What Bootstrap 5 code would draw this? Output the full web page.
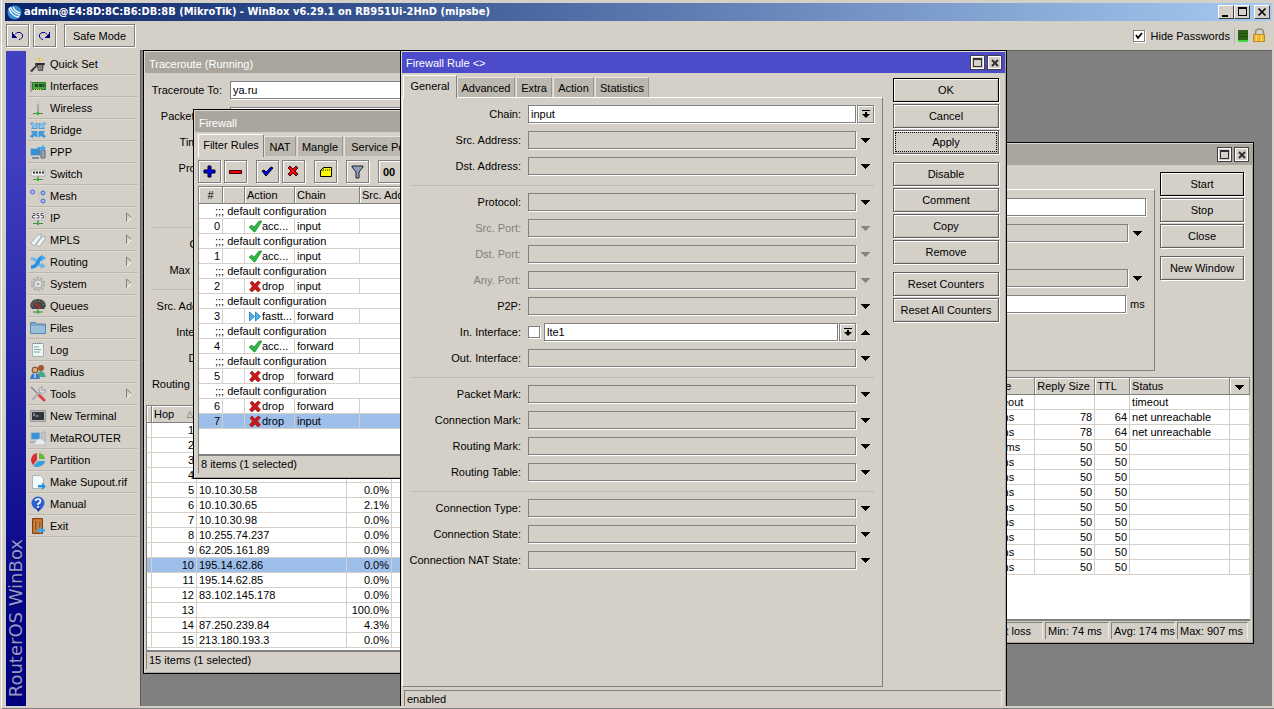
<!DOCTYPE html>
<html lang="en">
<head>
<meta charset="utf-8">
<meta name="viewport" content="width=device-width, initial-scale=1">
<title>WinBox</title>
<link href="https://cdn.jsdelivr.net/npm/bootstrap@5.3.0/dist/css/bootstrap.min.css" rel="stylesheet">
<style>
:root{--face:#d4d0c8;--dim:#808080;--sel:#9dbfea}
body{font:11px/14px "Liberation Sans",Arial,sans-serif;color:#000;background:var(--face)}
.app{border-left:1px solid #fff;border-bottom:1px solid var(--dim);padding:3px 2px 2px 3px;margin-left:1px}
.caption-bar{height:18px;background:linear-gradient(90deg,#0a246a,#a6caf0);color:#fff;font:bold 11px/18px "DejaVu Sans Condensed","DejaVu Sans",sans-serif;padding:0 2px 0 2px}
.logo{margin-right:2px}
.sysbtn{width:16px;height:14px;padding:0;border:1px solid;border-color:#fff #404040 #404040 #fff;background:var(--face);border-radius:0;line-height:0}
.toolbar{height:29px;padding:0 4px 0 1px}
.face{border:1px solid var(--dim);border-radius:0;background:var(--face);color:#000;box-shadow:inset 1px 1px #fff,1px 1px #fff;padding:0;font:inherit;display:flex;align-items:center;justify-content:center;cursor:default}
.icon-btn{width:23px;height:23px}
.safe{width:71px;height:23px}
.hide-pw{margin-left:6px}
.wide{height:24px;border-color:#606060;box-shadow:inset 1px 1px #fff,inset -1px -1px #c0bcb4,1px 1px #fff}
.default-btn{border-color:#000}
.focused-btn::before{content:"";position:absolute;inset:1px;border:1px dotted #000}
.brand{width:20px;margin:1px 0 0 1px;background:linear-gradient(#4040c0 0,#4040c0 15%,#000080 90%)}
.brand span{writing-mode:vertical-rl;transform:rotate(180deg);font:18px/20px "DejaVu Sans",sans-serif;color:#9898cc;text-shadow:-1px -1px 1px #000040;padding-top:9px}
.side{width:114px;padding:3px 2px 0}
.side a{height:22px;color:#000;text-decoration:none;border-bottom:1px solid #bcb8b0;box-shadow:0 1px #dedad2;padding:0 6px 0 2px;gap:4px;white-space:nowrap}
.side svg{width:16px;height:16px;flex:none}
.side .arr{width:6px;height:11px}
.desk{background:var(--dim);border-left:1px solid #5c5c5c;box-shadow:inset 0 1px #606060}
.win{position:absolute;background:var(--face);border:1px solid #000;box-shadow:inset 1px 1px #dedad2,inset -1px -1px #aaa69e;padding:1px}
.win-title{height:21px;background:#aaa69e;color:#fff;padding:0 3px 0 4px;gap:2px;line-height:24px}
.active-title{background:#4c4ccb}
.mini{width:15px;height:15px;padding:0;border:1px solid #404040;background:var(--face);border-radius:0;box-shadow:inset 0 0 0 1px #fff;line-height:0;display:flex;align-items:center;justify-content:center}
.w-trace{left:2px;top:0;width:700px;height:624px}
.w-ping{left:560px;top:92px;width:553px;height:502px}
.w-fw{left:52px;top:59px;width:600px;height:370px}
.w-rule{left:259px;top:0;width:607px;height:676px}
.fld{height:18px;min-height:0;padding:0 2px;border:1px solid var(--dim);border-radius:0;background:#fff;box-shadow:1px 1px #fff;font:inherit;color:#000;min-width:0}
.fld.off,.fld:disabled{background:var(--face)}
.box{width:12px;height:12px;margin:0;border:1px solid var(--dim);background-color:#fff;box-shadow:1px 1px #fff;appearance:none;flex:none}
.tick{position:relative;width:12px;height:12px}
.tick svg{position:absolute;left:2px;top:2px;pointer-events:none}
.rows{display:flex;flex-direction:column;gap:8px}
.line{display:flex;align-items:center;height:18px}
.line label{text-align:right;flex:none}
.rule{padding-top:7px;height:590px}
.rule label{width:118px;margin-right:7px}
.trace label{width:77px;margin-right:8px}
.dis{color:var(--dim)}
.sep{height:1px;background:#bcb8b0;margin:10px 8px 7px 8px}
.drop{width:18px;height:18px;border:0;background:none;padding:0;flex:none;display:flex;align-items:center;justify-content:center}
.pull{width:17px;height:18px;flex:none;margin-left:1px}
.tabs{height:22px;padding-left:1px}
.tab{border:0;border-left:1px solid #e8e4dc;border-right:1px solid #9a968e;border-top:1px solid #e8e4dc;background:#bcb8b0;color:#000;font:inherit;height:20px;border-radius:0;padding:0;margin-right:1px}
.tab.on{height:23px;background:var(--face);border-color:#fff var(--dim) #fff #fff;margin:0 0 -1px;z-index:1;position:relative;padding-bottom:3px}
.rule-tabs{margin-top:2px}
.t32{width:32px}.t36{width:36px}.t41{width:41px}.t46{width:46px}.t52{width:52px}.t54{width:54px}.t58{width:58px}.t66{width:66px}.t80{width:80px}
.pane{border:1px solid;border-color:#fff var(--dim) var(--dim) #fff}
.dt{table-layout:fixed;border-collapse:separate;border-spacing:0;margin:0;width:auto;color:#000}
.dt td,.dt th{height:15px;padding:0 2px;border:0;border-right:1px solid var(--face);border-bottom:1px solid var(--face);background:#fff;font-weight:400;line-height:14px;white-space:nowrap;overflow:hidden;box-shadow:none;color:#000;vertical-align:middle}
.dt th{height:17px;background:var(--face);border-right-color:var(--dim);border-bottom-color:var(--dim);box-shadow:inset 1px 1px #fff}
.dt .n{text-align:right}
.dt .sel td{background:var(--sel)}
.c4{width:4px}.c20{width:20px}.c22{width:22px}.c24{width:24px}.c35{width:35px}.c45{width:45px}.c50{width:50px}.c60{width:60px}.c65{width:65px}.c100{width:100px}.c150{width:150px}.c283{width:283px}.c300{width:300px}
.sheet{background:#fff;border-top:1px solid var(--dim);border-left:1px solid var(--dim);border-bottom:2px solid var(--dim);overflow:hidden}
.trace-sheet{margin:12px 2px 0 1px}
.trace-stat{margin:0 2px 3px 1px}
.ping-sheet{margin:6px 2px 0 0}
.stat{border-top:1px solid var(--dim);border-left:1px solid var(--dim);border-right:1px solid #f0ece4;padding:0 2px;height:17px;line-height:17px;white-space:nowrap}
.cmd{width:106px;gap:2px;margin:0 6px 0 10px;padding-top:5px}
.gap-above{margin-top:6px}
.act{display:flex;align-items:center;padding-left:1px}
.act svg{width:14px;height:13px;flex:none}
.ping-pane{margin-right:5px;height:182px;border-left:0}
.spacer{height:27px}
.unit{width:20px;padding-left:4px}
.line .unit{text-align:left}
.cmd2{width:92px;padding:7px 8px 0 0;gap:2px}
.ping-stats{gap:2px;padding:1px 4px 3px 0}
.loss{width:70px;text-align:right;padding-right:14px}.s64{width:64px}.s70{width:71px}
.fw-tabs{margin:2px 0 0 2px}
.fw-body{margin-left:3px}
.fw-tools{height:30px;padding:4px 0 0;gap:3px}
.fw-tools .apart{margin-left:6px}
.reset{width:90px}
.rule-stat{margin:3px 3px 0 2px}
</style>
</head>
<body>
<svg width="0" height="0" class="position-absolute" aria-hidden="true">
<defs>
<symbol id="dn" viewBox="0 0 9 5"><path d="M0 0h9v1h-1v1h-1v1h-1v1h-1v1h-1v-1h-1v-1h-1v-1h-1v-1h-1z"/></symbol>
<symbol id="up" viewBox="0 0 9 5"><path d="M0 5h9v-1h-1v-1h-1v-1h-1v-1h-1v-1h-1v1h-1v1h-1v1h-1v1h-1z"/></symbol>
<symbol id="pl" viewBox="0 0 8 8"><path d="M0 0h8v1H0zM3 2h2v2h3L4 8 0 4h3z"/></symbol>
<symbol id="mx" viewBox="0 0 9 9"><path d="M0 0h9v9H0zM1 2v6h7V2z" fill="#303030" fill-rule="evenodd"/></symbol>
<symbol id="cl" viewBox="0 0 8 8"><path d="M1 1l6 6M7 1L1 7" stroke="#303030" stroke-width="2"/></symbol>
<symbol id="arr" viewBox="0 0 6 11"><path d="M.5 10V1l5 4.500" fill="none" stroke="#808080"/><path d="M5.500 5.500l-5 5" stroke="#fff"/></symbol>
<symbol id="ok" viewBox="0 0 14 13"><path d="M1 7l3-2 2 2 5-6 3 0-7 11-1 0z" fill="#2db53e" stroke="#188a2c" stroke-width=".6"/></symbol>
<symbol id="no" viewBox="0 0 14 13"><path d="M2 3l2-2 3 3 3-3 2.500 1.500L9.500 6l3 4-2.500 2-3-3-3 3L1.500 10l3-4z" fill="#c81818" stroke="#8c1010" stroke-width=".6"/></symbol>
<symbol id="ff" viewBox="0 0 14 13"><path d="M1.500 2l5 4.500-5 4.500zM7.500 2l5 4.500-5 4.500z" fill="#4cb4f0" stroke="#2078b8" stroke-width=".8"/></symbol>
<symbol id="undo" viewBox="0 0 13 11"><path d="M1 2v6h5V7H5V6H4V5H3V4H2V2z" fill="#000080"/><path d="M4 4.500L6 2.500h3l2.500 2v2.500L9 9.500H8" fill="none" stroke="#000080"/></symbol>
</defs>
</svg>
<div class="app vh-100 d-flex flex-column overflow-hidden">
<header class="caption-bar d-flex align-items-center">
<svg width="15" height="15" viewBox="0 0 15 15" class="logo"><circle cx="7.500" cy="7.500" r="7" fill="#3a8cd4"/><path d="M2 3c1 5 5 9 10 9M3 2c2 4 5 7 10 8M6 2c1 3 4 5 7 6" stroke="#fff" fill="none" stroke-width="1.300"/></svg>
<span class="flex-grow-1 text-truncate">admin@E4:8D:8C:B6:DB:8B (MikroTik) - WinBox v6.29.1 on RB951Ui-2HnD (mipsbe)</span>
<button class="sysbtn" aria-label="Minimize"><svg width="12" height="10"><path d="M2 8h6v2H2z"/></svg></button>
<button class="sysbtn" aria-label="Maximize"><svg width="12" height="10"><path d="M2 0h9v9H2zM3 2v6h7V2z" fill-rule="evenodd"/></svg></button>
<button class="sysbtn ms-1" aria-label="Close"><svg width="12" height="10"><path d="M2.500 1.500l7 7M9.500 1.500l-7 7" stroke="#000" stroke-width="1.600"/></svg></button>
</header>
<div class="toolbar d-flex align-items-center">
<button class="btn face icon-btn" aria-label="Undo"><svg width="13" height="11"><use href="#undo"/></svg></button>
<button class="btn face icon-btn ms-1" aria-label="Redo"><svg width="13" height="11"><use href="#undo" transform="matrix(-1 0 0 1 13 0)"/></svg></button>
<button class="btn face safe ms-2">Safe Mode</button>
<span class="tick ms-auto"><input class="box d-block" type="checkbox" id="hp" checked><svg width="8" height="8"><path d="M1 3l2 3 4-5" stroke="#000" stroke-width="1.800" fill="none"/></svg></span>
<label for="hp" class="hide-pw">Hide Passwords</label>
<svg class="ms-1" width="34" height="16"><path d="M.5 0v16" stroke="#bcb8b0"/><path d="M4 2h10v12H4z" fill="#2c6414"/><path d="M4 5.500h10M4 8.500h10" stroke="#205010"/><path d="M4 12h10v2H4z" fill="#40d840"/><path d="M21.500 8V4q0-3 4-3t4 3v4" fill="none" stroke="#909080" stroke-width="1.600"/><path d="M19.500 6.500h11v7h-11z" fill="#f4b838" stroke="#c08820"/><path d="M22.500 7v6M27.500 7v6" stroke="#fce060"/></svg>
</div>
<div class="d-flex flex-grow-1 overflow-hidden">
<div class="brand flex-shrink-0 d-flex align-items-end"><span>RouterOS WinBox</span></div>
<nav class="side flex-shrink-0">
<a href="#" class="d-flex align-items-center"><svg viewBox="0 0 16 16"><path d="M0 15l8-8 1 1-7 8z" fill="#333"/><path d="M6 7h8l-1 8H8z" fill="#555"/><path d="M9 9v5M11 9v5" stroke="#aaa"/><path d="M5 8h10" stroke="#222" stroke-width="1.500"/><path d="M5 3h2M9 1v3M12 3l1 1M8 5h2" stroke="#e8c030" stroke-width="1.200"/></svg>Quick Set</a>
<a href="#" class="d-flex align-items-center"><svg viewBox="0 0 16 16"><path d="M1 3v11" stroke="#999" stroke-width="1.500"/><path d="M2.500 4.500h13v7h-13z" fill="#48a848" stroke="#287828"/><path d="M5 6h3v3H5zM9 6h3v3H9zM12.500 6h2v3h-2z" fill="#204820"/><path d="M4 11.500h8" stroke="#e0c040" stroke-dasharray="1 1"/></svg>Interfaces</a>
<a href="#" class="d-flex align-items-center"><svg viewBox="0 0 16 16"><path d="M8 4v9" stroke="#888" stroke-width="1.200"/><path d="M5 3q3-3 6 0M6 5q2-2 4 0" stroke="#c4c4c4" fill="none"/><path d="M3 13.500h10" stroke="#607860"/><path d="M6 13.500l2-2 2 2-2 2z" fill="#28b828"/></svg>Wireless</a>
<a href="#" class="d-flex align-items-center"><svg viewBox="0 0 16 16"><g fill="#88ccf4" stroke="#3088c8" stroke-width=".7"><path d="M.5 1.500l2-1 2 2L7 1v5.500H1.500L3 4.500z"/><path d="M15.500 1.500l-2-1-2 2L9 1v5.500h5.500L13 4.500z"/><path d="M.5 14.500l2 1 2-2L7 15V9.500H1.500L3 11.500z" fill="#38a0e8"/><path d="M15.500 14.500l-2 1-2-2L9 15V9.500h5.500L13 11.500z" fill="#38a0e8"/></g></svg>Bridge</a>
<a href="#" class="d-flex align-items-center"><svg viewBox="0 0 16 16"><path d="M.5 4.500h10v7H.5z" fill="#3890d0" stroke="#a8b8c4"/><path d="M2 14h7" stroke="#889" stroke-width="2"/><path d="M11 6h4v8h-4z" fill="#98a4ac" stroke="#667"/><path d="M7 3h5V1l4 3-4 3V5H8z" fill="#38a8f0"/></svg>PPP</a>
<a href="#" class="d-flex align-items-center"><svg viewBox="0 0 16 16"><path d="M1 4h14v6H1z" fill="#eee" stroke="#999" stroke-width=".6"/><path d="M3 6.500h11" stroke="#333" stroke-width="2" stroke-dasharray="2 1"/><path d="M8 10v4M3 13.500h10" stroke="#607860"/><path d="M6 13.500l2-2 2 2-2 2z" fill="#28b828"/></svg>Switch</a>
<a href="#" class="d-flex align-items-center"><svg viewBox="0 0 16 16"><path d="M5 4h4v8h3M9 5h3" fill="none" stroke="#c4c4c4"/><g fill="#a8c0f8" stroke="#4068d0"><circle cx="2.500" cy="4" r="2"/><circle cx="13" cy="5" r="2"/><circle cx="13" cy="13" r="2"/></g></svg>Mesh</a>
<a href="#" class="d-flex align-items-center"><svg viewBox="0 0 16 16"><path d="M1 2h14v8H1z" fill="#f0f0f0" stroke="#aaa" stroke-width=".6"/><path d="M2.500 3.500h2.500v2H2.500v2.500h3M9 3.500H7v2h2V8H6.500M13.500 3.500h-2.500v2h2.500V8H11" stroke="#555" fill="none"/><path d="M8 10v4M3 13.500h10" stroke="#607860"/><path d="M6 13.500l2-2 2 2-2 2z" fill="#28b828"/></svg>IP<svg class="arr ms-auto"><use href="#arr"/></svg></a>
<a href="#" class="d-flex align-items-center"><svg viewBox="0 0 16 16"><path d="M1 11l7-8 3-1v3l-7 9zM6 13l6-8 3-1v3l-6 8z" fill="#eef4f4" stroke="#98a8a8" stroke-width=".8"/></svg>MPLS<svg class="arr ms-auto"><use href="#arr"/></svg></a>
<a href="#" class="d-flex align-items-center"><svg viewBox="0 0 16 16"><path d="M1 5q4-1 6 3t6 4" stroke="#70b8e8" stroke-width="3" fill="none"/><path d="M11 8.500l5 3.500-5 3z" fill="#70b8e8"/><path d="M1 13q5 0 7-5t5-4" stroke="#2890e0" stroke-width="3.500" fill="none"/><path d="M11 .5l5 3.500-5 3.500z" fill="#48a8f0"/></svg>Routing<svg class="arr ms-auto"><use href="#arr"/></svg></a>
<a href="#" class="d-flex align-items-center"><svg viewBox="0 0 16 16"><circle cx="8" cy="8" r="6" fill="none" stroke="#b0b0b0" stroke-width="2.500" stroke-dasharray="2.500 1.200"/><circle cx="8" cy="8" r="4" fill="#e4e4e4" stroke="#b0b0b0" stroke-width="1.500"/><circle cx="8" cy="8" r="1.500" fill="#aaa"/></svg>System<svg class="arr ms-auto"><use href="#arr"/></svg></a>
<a href="#" class="d-flex align-items-center"><svg viewBox="0 0 16 16"><path d="M0 8Q1 1 8 1t8 7l-2 3H2z" fill="#484848"/><path d="M2 8q1-5 6-5t6 5" stroke="#aaa" fill="none" stroke-dasharray="1 2"/><path d="M5 5l5 5" stroke="#e02020" stroke-width="1.200"/><path d="M8 11v3M3 14h10" stroke="#607860"/><path d="M6 14l2-2 2 2-2 2z" fill="#28b828"/></svg>Queues</a>
<a href="#" class="d-flex align-items-center"><svg viewBox="0 0 16 16"><path d="M.5 13.500v-11h5l1 1.500h9v9.500z" fill="#7ca8cc" stroke="#5c88b0"/><path d="M1 6h14v7H1z" fill="#98c0dc"/></svg>Files</a>
<a href="#" class="d-flex align-items-center"><svg viewBox="0 0 16 16"><path d="M2.500 1.500h11v13h-11z" fill="#eef6f4" stroke="#a0b4b0"/><path d="M4 5h5M4 7.500h7M4 10h6" stroke="#80a8a0"/><path d="M3 1.500h10" stroke="#779" stroke-dasharray="1 1"/></svg>Log</a>
<a href="#" class="d-flex align-items-center"><svg viewBox="0 0 16 16"><circle cx="11" cy="4" r="3" fill="#a05828"/><path d="M7 13q1-6 4-6t5 6z" fill="#48a888"/><circle cx="5" cy="6" r="3" fill="#e0a878" stroke="#704820"/><path d="M0 15q1-6 5-6t5 6z" fill="#3878c8"/><path d="M5 9v5" stroke="#fff"/></svg>Radius</a>
<a href="#" class="d-flex align-items-center"><svg viewBox="0 0 16 16"><path d="M1 1l8 8" stroke="#888" stroke-width="1.500"/><path d="M9 9l5 5" stroke="#e04040" stroke-width="3" stroke-linecap="round"/><path d="M2 14l8-8" stroke="#a8acb0" stroke-width="2"/><path d="M15 3l-2 2-2-2 2-2q-3-.5-4 2t2 4 4-1 0-3z" fill="#d8dce0" stroke="#889" stroke-width=".7"/></svg>Tools<svg class="arr ms-auto"><use href="#arr"/></svg></a>
<a href="#" class="d-flex align-items-center"><svg viewBox="0 0 16 16"><path d="M.5 2.500h15v11H.5z" fill="#bbb" stroke="#999"/><path d="M2 4h12v8H2z" fill="#30343c"/><path d="M3 5l2 1.500L3 8M5.500 8h3" stroke="#ddd" fill="none" stroke-width=".8"/></svg>New Terminal</a>
<a href="#" class="d-flex align-items-center"><svg viewBox="0 0 16 16"><path d="M1 2.500h9v7H1z" fill="#3890d8" stroke="#b0bcc4"/><path d="M12 2h3v9h-3z" fill="#c8ccd0" stroke="#999" stroke-width=".6"/><path d="M0 12h8" stroke="#aab" stroke-width="2"/><path d="M5 15q-2-3 1-4 1-3 4-2 3-1 3 1 3 1 2 5z" fill="#e8ecf0" stroke="#aab" stroke-width=".6"/></svg>MetaROUTER</a>
<a href="#" class="d-flex align-items-center"><svg viewBox="0 0 16 16"><path d="M7 8V1Q1 2 1 9q1 3 2 4z" fill="#d83030"/><path d="M9 7V1q5 0 6 6z" fill="#68b838"/><path d="M15 9H8l-5 5q4 2 8 0 4-2 4-5z" fill="#38a0d8"/></svg>Partition</a>
<a href="#" class="d-flex align-items-center"><svg viewBox="0 0 16 16"><path d="M2.500 1.500h8l3 3v10h-11z" fill="#f4fafa" stroke="#a8b8b8"/><path d="M8 11h4V8.500l4 4-4 3.500v-2.500H8z" fill="#2890e0"/></svg>Make Supout.rif</a>
<a href="#" class="d-flex align-items-center"><svg viewBox="0 0 16 16"><circle cx="8" cy="7" r="6.500" fill="#3060d0"/><path d="M6 12h6l-4 4z" fill="#2040a8"/><path d="M5.500 5q0-2 2.500-2t2.500 2q0 1.500-2.500 3v1M8 10v2" stroke="#fff" stroke-width="1.600" fill="none"/></svg>Manual</a>
<a href="#" class="d-flex align-items-center"><svg viewBox="0 0 16 16"><path d="M2.500.5h10v15h-10z" fill="#c07030" stroke="#804010"/><path d="M4.500 2.500h2.500v10H4.500zM8.500 2.500H11v10H8.500z" fill="#a05820" stroke="#e09850" stroke-width=".6"/><path d="M15 11h-4V8.500l-4 4 4 3.500v-2.500h4z" fill="#38a8f0"/></svg>Exit</a>
</nav>
<main class="desk flex-grow-1 position-relative overflow-hidden">

<section class="win w-trace d-flex flex-column">
<div class="win-title">Traceroute (Running)</div>
<div class="trace pt-2 pe-2">
<div class="rows">
<div class="line"><label for="t1">Traceroute To:</label><input id="t1" class="form-control fld" value="ya.ru"></div>
<div class="line"><label for="t2">Packet Size:</label><input id="t2" class="form-control fld"></div>
<div class="line"><label for="t3">Timeout:</label><input id="t3" class="form-control fld"></div>
<div class="line"><label for="t4">Protocol:</label><input id="t4" class="form-control fld"></div>
<div class="line"><label for="t5">Port:</label><input id="t5" class="form-control fld"></div>
</div>
<div class="sep mt-4"></div>
<div class="rows">
<div class="line"><label for="t6">Count:</label><input id="t6" class="form-control fld"></div>
<div class="line"><label for="t7">Max Hops:</label><input id="t7" class="form-control fld"></div>
</div>
<div class="sep"></div>
<div class="rows">
<div class="line"><label for="t8">Src. Address:</label><input id="t8" class="form-control fld"></div>
<div class="line"><label for="t9">Interface:</label><input id="t9" class="form-control fld"></div>
<div class="line"><label for="t10">DSCP:</label><input id="t10" class="form-control fld"></div>
<div class="line"><label for="t11">Routing Table:</label><input id="t11" class="form-control fld"></div>
</div>
</div>
<div class="sheet trace-sheet flex-grow-1">
<table class="table dt"><colgroup><col class="c4"><col class="c45"><col class="c150"><col class="c45"><col class="c300"></colgroup>
<thead><tr><th></th><th>Hop <svg width="8" height="7" class="float-end mt-1"><path d="M1 6.500l3-6 3 6z" fill="none" stroke="#909090"/></svg></th><th></th><th></th><th></th></tr></thead>
<tbody>
<tr><td></td><td class="n">1</td><td></td><td></td><td></td></tr>
<tr><td></td><td class="n">2</td><td></td><td></td><td></td></tr>
<tr><td></td><td class="n">3</td><td></td><td></td><td></td></tr>
<tr><td></td><td class="n">4</td><td></td><td></td><td></td></tr>
<tr><td></td><td class="n">5</td><td>10.10.30.58</td><td class="n">0.0%</td><td></td></tr>
<tr><td></td><td class="n">6</td><td>10.10.30.65</td><td class="n">2.1%</td><td></td></tr>
<tr><td></td><td class="n">7</td><td>10.10.30.98</td><td class="n">0.0%</td><td></td></tr>
<tr><td></td><td class="n">8</td><td>10.255.74.237</td><td class="n">0.0%</td><td></td></tr>
<tr><td></td><td class="n">9</td><td>62.205.161.89</td><td class="n">0.0%</td><td></td></tr>
<tr class="sel"><td></td><td class="n">10</td><td>195.14.62.86</td><td class="n">0.0%</td><td></td></tr>
<tr><td></td><td class="n">11</td><td>195.14.62.85</td><td class="n">0.0%</td><td></td></tr>
<tr><td></td><td class="n">12</td><td>83.102.145.178</td><td class="n">0.0%</td><td></td></tr>
<tr><td></td><td class="n">13</td><td></td><td class="n">100.0%</td><td></td></tr>
<tr><td></td><td class="n">14</td><td>87.250.239.84</td><td class="n">4.3%</td><td></td></tr>
<tr><td></td><td class="n">15</td><td>213.180.193.3</td><td class="n">0.0%</td><td></td></tr>
</tbody></table>
</div>
<div class="stat trace-stat border-top-0">15 items (1 selected)</div>
</section>

<section class="win w-ping d-flex flex-column">
<div class="win-title d-flex align-items-center justify-content-end">
<button class="mini" aria-label="Maximize"><svg width="9" height="9"><use href="#mx"/></svg></button><button class="mini" aria-label="Close"><svg width="8" height="8"><use href="#cl"/></svg></button></div>
<div class="d-flex">
<div class="flex-grow-1 mt-4"><div class="pane ping-pane">
<div class="line mt-2 pe-2"><input aria-label="Ping To" class="form-control fld"></div>
<div class="line mt-2 pe-2"><input aria-label="Interface" class="form-control fld off"><button class="drop" aria-label="Choose"><svg width="9" height="5"><use href="#dn"/></svg></button></div>
<div class="spacer"></div>
<div class="line pe-2"><input aria-label="Packet Count" class="form-control fld off"><button class="drop" aria-label="Choose"><svg width="9" height="5"><use href="#dn"/></svg></button></div>
<div class="line mt-2 pe-2"><input id="tmo" class="form-control fld"><label for="tmo" class="unit">ms</label></div>
</div></div>
<div class="cmd2 d-flex flex-column">
<button class="btn face wide default-btn">Start</button><button class="btn face wide">Stop</button><button class="btn face wide">Close</button><button class="btn face wide gap-above">New Window</button>
</div></div>
<div class="sheet ping-sheet flex-grow-1">
<table class="table dt ms-auto"><colgroup><col class="c283"><col class="c50"><col class="c60"><col class="c35"><col class="c100"><col class="c20"></colgroup>
<thead><tr><th></th><th>Time</th><th>Reply Size</th><th>TTL</th><th>Status</th><th class="text-center"><svg width="9" height="5"><use href="#dn"/></svg></th></tr></thead>
<tbody>
<tr><td></td><td>timeout</td><td></td><td></td><td>timeout</td><td></td></tr>
<tr><td></td><td>74ms</td><td class="n">78</td><td class="n">64</td><td>net unreachable</td><td></td></tr>
<tr><td></td><td>74ms</td><td class="n">78</td><td class="n">64</td><td>net unreachable</td><td></td></tr>
<tr><td></td><td>907ms</td><td class="n">50</td><td class="n">50</td><td></td><td></td></tr>
<tr><td></td><td>74ms</td><td class="n">50</td><td class="n">50</td><td></td><td></td></tr>
<tr><td></td><td>74ms</td><td class="n">50</td><td class="n">50</td><td></td><td></td></tr>
<tr><td></td><td>74ms</td><td class="n">50</td><td class="n">50</td><td></td><td></td></tr>
<tr><td></td><td>74ms</td><td class="n">50</td><td class="n">50</td><td></td><td></td></tr>
<tr><td></td><td>74ms</td><td class="n">50</td><td class="n">50</td><td></td><td></td></tr>
<tr><td></td><td>74ms</td><td class="n">50</td><td class="n">50</td><td></td><td></td></tr>
<tr><td></td><td>74ms</td><td class="n">50</td><td class="n">50</td><td></td><td></td></tr>
<tr><td></td><td>74ms</td><td class="n">50</td><td class="n">50</td><td></td><td></td></tr>
</tbody></table>
</div>
<div class="d-flex justify-content-end ping-stats"><div class="stat loss">packet loss</div><div class="stat s64">Min: 74 ms</div><div class="stat s64">Avg: 174 ms</div><div class="stat s70">Max: 907 ms</div></div>
</section>

<section class="win w-fw d-flex flex-column">
<div class="win-title">Firewall</div>
<div class="tabs fw-tabs d-flex align-items-end">
<button class="tab on t66">Filter Rules</button><button class="tab t32">NAT</button><button class="tab t46">Mangle</button><button class="tab t80">Service Ports</button></div>
<div class="fw-body d-flex flex-column flex-grow-1">
<div class="fw-tools d-flex">
<button class="btn face icon-btn" aria-label="Add"><svg width="13" height="13"><path d="M5 1h3v4h4v3H8v4H5V8H1V5h4z" fill="#00f" stroke="#000"/></svg></button>
<button class="btn face icon-btn" aria-label="Remove"><svg width="13" height="13"><path d="M.5 5.500h12v3H.5z" fill="#f00" stroke="#300"/></svg></button>
<button class="btn face icon-btn apart" aria-label="Enable"><svg width="13" height="13"><path d="M1 6l2-1 2 2 5-5 2 1-7 8z" fill="#00f" stroke="#000"/></svg></button>
<button class="btn face icon-btn" aria-label="Disable"><svg width="13" height="13"><path d="M1 3l2-2 3 3 3-3 2 2-3 3 3 3-2 2-3-3-3 3-2-2 3-3z" fill="#f00" stroke="#000" stroke-width=".8"/></svg></button>
<button class="btn face icon-btn apart" aria-label="Comment"><svg width="14" height="12"><path d="M1.500 4.500l3-3h8v9h-11z" fill="#ff0" stroke="#000"/><path d="M1.500 4.500h3v-3M6 4h5" fill="none" stroke="#000" stroke-dasharray="1 1"/></svg></button>
<button class="btn face icon-btn apart" aria-label="Filter"><svg width="13" height="14"><path d="M1 1h11v1L8 7v6H5V7L1 2z" fill="#90a0c0" stroke="#222"/></svg></button>
<button class="btn face icon-btn apart reset"><b class="me-auto ps-1">00</b></button>
</div>
<div class="sheet flex-grow-1">
<table class="table dt"><colgroup><col class="c24"><col class="c22"><col class="c50"><col class="c65"><col class="c300"></colgroup>
<thead><tr><th class="text-center">#</th><th></th><th>Action</th><th>Chain</th><th>Src. Address</th></tr></thead>
<tbody>
<tr><td colspan="5" class="ps-3">;;; default configuration</td></tr>
<tr><td class="n">0</td><td></td><td><span class="act"><svg><use href="#ok"/></svg>acc...</span></td><td>input</td><td></td></tr>
<tr><td colspan="5" class="ps-3">;;; default configuration</td></tr>
<tr><td class="n">1</td><td></td><td><span class="act"><svg><use href="#ok"/></svg>acc...</span></td><td>input</td><td></td></tr>
<tr><td colspan="5" class="ps-3">;;; default configuration</td></tr>
<tr><td class="n">2</td><td></td><td><span class="act"><svg><use href="#no"/></svg>drop</span></td><td>input</td><td></td></tr>
<tr><td colspan="5" class="ps-3">;;; default configuration</td></tr>
<tr><td class="n">3</td><td></td><td><span class="act"><svg><use href="#ff"/></svg>fastt...</span></td><td>forward</td><td></td></tr>
<tr><td colspan="5" class="ps-3">;;; default configuration</td></tr>
<tr><td class="n">4</td><td></td><td><span class="act"><svg><use href="#ok"/></svg>acc...</span></td><td>forward</td><td></td></tr>
<tr><td colspan="5" class="ps-3">;;; default configuration</td></tr>
<tr><td class="n">5</td><td></td><td><span class="act"><svg><use href="#no"/></svg>drop</span></td><td>forward</td><td></td></tr>
<tr><td colspan="5" class="ps-3">;;; default configuration</td></tr>
<tr><td class="n">6</td><td></td><td><span class="act"><svg><use href="#no"/></svg>drop</span></td><td>forward</td><td></td></tr>
<tr class="sel"><td class="n">7</td><td></td><td><span class="act"><svg><use href="#no"/></svg>drop</span></td><td>input</td><td></td></tr>
</tbody></table>
</div>
<div class="stat border-top-0 mb-1">8 items (1 selected)</div>
</div>
</section>

<section class="win w-rule d-flex flex-column">
<div class="win-title active-title d-flex align-items-center"><span class="flex-grow-1">Firewall Rule &lt;&gt;</span>
<button class="mini" aria-label="Maximize"><svg width="9" height="9"><use href="#mx"/></svg></button><button class="mini" aria-label="Close"><svg width="8" height="8"><use href="#cl"/></svg></button></div>
<div class="d-flex">
<div class="flex-grow-1 d-flex flex-column">
<div class="tabs rule-tabs d-flex align-items-end">
<button class="tab on t54">General</button><button class="tab t58">Advanced</button><button class="tab t36">Extra</button><button class="tab t41">Action</button><button class="tab t54">Statistics</button></div>
<div class="pane rule">
<div class="rows">
<div class="line pe-2"><label for="r1">Chain:</label><input id="r1" class="form-control fld" value="input"><button class="btn face pull" aria-label="Choose"><svg width="8" height="8"><use href="#pl"/></svg></button></div>
<div class="line"><label for="r2">Src. Address:</label><input id="r2" class="form-control fld off"><button class="drop me-2" aria-label="Expand"><svg width="9" height="5"><use href="#dn"/></svg></button></div>
<div class="line"><label for="r3">Dst. Address:</label><input id="r3" class="form-control fld off"><button class="drop me-2" aria-label="Expand"><svg width="9" height="5"><use href="#dn"/></svg></button></div>
</div><div class="sep"></div><div class="rows">
<div class="line"><label for="r4">Protocol:</label><input id="r4" class="form-control fld off"><button class="drop me-2" aria-label="Expand"><svg width="9" height="5"><use href="#dn"/></svg></button></div>
<div class="line dis"><label for="r5">Src. Port:</label><input id="r5" class="form-control fld" disabled><button class="drop me-2" disabled aria-label="Expand"><svg width="9" height="5" fill="#808880"><use href="#dn"/></svg></button></div>
<div class="line dis"><label for="r6">Dst. Port:</label><input id="r6" class="form-control fld" disabled><button class="drop me-2" disabled aria-label="Expand"><svg width="9" height="5" fill="#808880"><use href="#dn"/></svg></button></div>
<div class="line dis"><label for="r7">Any. Port:</label><input id="r7" class="form-control fld" disabled><button class="drop me-2" disabled aria-label="Expand"><svg width="9" height="5" fill="#808880"><use href="#dn"/></svg></button></div>
<div class="line"><label for="r8">P2P:</label><input id="r8" class="form-control fld off"><button class="drop me-2" aria-label="Expand"><svg width="9" height="5"><use href="#dn"/></svg></button></div>
<div class="line"><label for="r9">In. Interface:</label><input type="checkbox" class="box me-1" aria-label="Invert"><input id="r9" class="form-control fld" value="lte1"><button class="btn face pull" aria-label="Choose"><svg width="8" height="8"><use href="#pl"/></svg></button><button class="drop me-2" aria-label="Collapse"><svg width="9" height="5"><use href="#up"/></svg></button></div>
<div class="line"><label for="r10">Out. Interface:</label><input id="r10" class="form-control fld off"><button class="drop me-2" aria-label="Expand"><svg width="9" height="5"><use href="#dn"/></svg></button></div>
</div><div class="sep"></div><div class="rows">
<div class="line"><label for="r11">Packet Mark:</label><input id="r11" class="form-control fld off"><button class="drop me-2" aria-label="Expand"><svg width="9" height="5"><use href="#dn"/></svg></button></div>
<div class="line"><label for="r12">Connection Mark:</label><input id="r12" class="form-control fld off"><button class="drop me-2" aria-label="Expand"><svg width="9" height="5"><use href="#dn"/></svg></button></div>
<div class="line"><label for="r13">Routing Mark:</label><input id="r13" class="form-control fld off"><button class="drop me-2" aria-label="Expand"><svg width="9" height="5"><use href="#dn"/></svg></button></div>
<div class="line"><label for="r14">Routing Table:</label><input id="r14" class="form-control fld off"><button class="drop me-2" aria-label="Expand"><svg width="9" height="5"><use href="#dn"/></svg></button></div>
</div><div class="sep"></div><div class="rows">
<div class="line"><label for="r15">Connection Type:</label><input id="r15" class="form-control fld off"><button class="drop me-2" aria-label="Expand"><svg width="9" height="5"><use href="#dn"/></svg></button></div>
<div class="line"><label for="r16">Connection State:</label><input id="r16" class="form-control fld off"><button class="drop me-2" aria-label="Expand"><svg width="9" height="5"><use href="#dn"/></svg></button></div>
<div class="line"><label for="r17">Connection NAT State:</label><input id="r17" class="form-control fld off"><button class="drop me-2" aria-label="Expand"><svg width="9" height="5"><use href="#dn"/></svg></button></div>
</div>
</div>
</div>
<div class="cmd d-flex flex-column flex-shrink-0">
<button class="btn face wide default-btn">OK</button><button class="btn face wide">Cancel</button><button class="btn face wide focused-btn position-relative">Apply</button>
<button class="btn face wide gap-above">Disable</button><button class="btn face wide">Comment</button><button class="btn face wide">Copy</button><button class="btn face wide">Remove</button>
<button class="btn face wide gap-above">Reset Counters</button><button class="btn face wide">Reset All Counters</button>
</div></div>
<div class="stat rule-stat">enabled</div>
</section>
</main>
</div>
</div>
<script src="https://cdn.jsdelivr.net/npm/bootstrap@5.3.0/dist/js/bootstrap.bundle.min.js"></script>
</body>
</html>
